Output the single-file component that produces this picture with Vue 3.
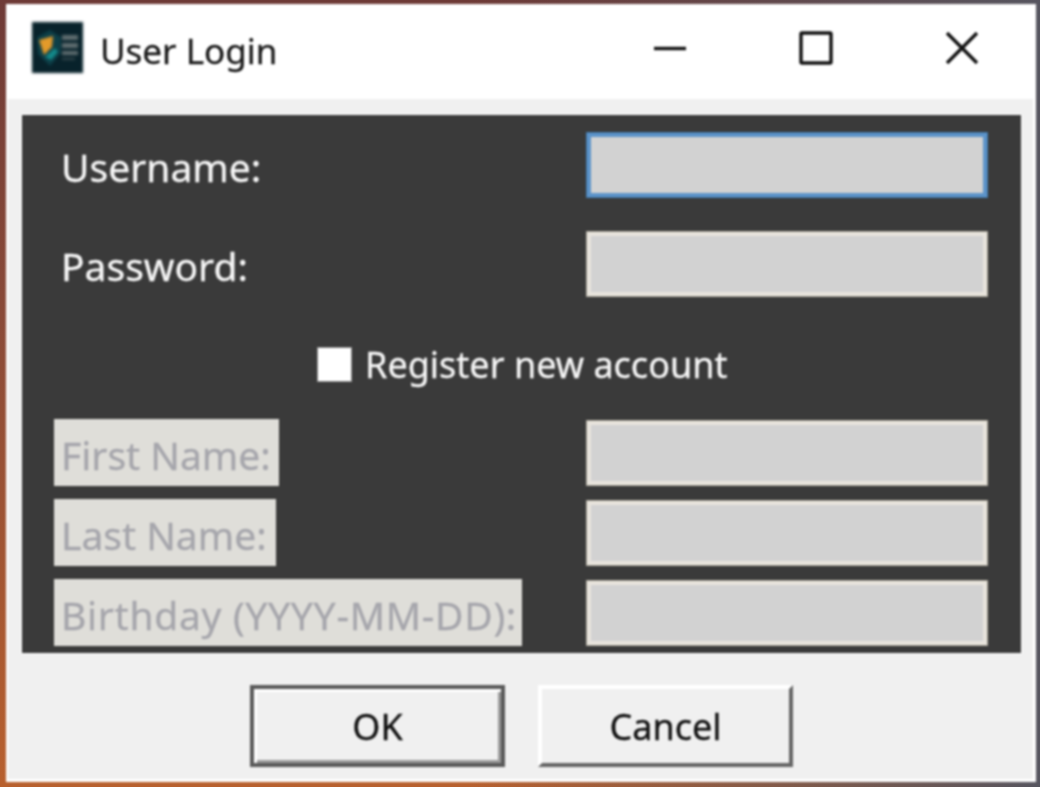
<script setup>
// User Login dialog, classic Windows look on a dark form panel
const extraFields = [
  { label: 'First Name:', width: '225px' },
  { label: 'Last Name:', width: '222px' },
  { label: 'Birthday (YYYY-MM-DD):', width: '468px', wide: true },
]
</script>

<template>
  <div class="desktop">
    <div class="window">
      <header class="titlebar">
        <svg class="app-icon" viewBox="0 0 51 51">
          <rect width="51" height="51" fill="#08222b" />
          <path d="M5 15 L18 8 L29 15 L29 31 L18 44 L6 32 Z" fill="#0d3f48" />
          <path d="M7 18 L21 14 L20 25 L12 33 Z" fill="#e39a2a" />
          <path d="M13 35 L23 26 L26 30 L19 38 Z" fill="#138a8a" />
          <g fill="#5f6d70">
            <rect x="30" y="13" width="16" height="5" />
            <rect x="30" y="21" width="16" height="5" />
            <rect x="30" y="29" width="16" height="4" />
            <rect x="30" y="36" width="13" height="2" opacity="0.5" />
          </g>
        </svg>
        <span class="title">User Login</span>
        <div class="controls">
          <button class="ctl">
            <svg viewBox="0 0 34 34"><path d="M1 17.5H33" /></svg>
          </button>
          <button class="ctl">
            <svg viewBox="0 0 34 34"><rect x="2" y="2" width="30" height="30" rx="1" /></svg>
          </button>
          <button class="ctl">
            <svg viewBox="0 0 34 34"><path d="M2 2L32 32M32 2L2 32" /></svg>
          </button>
        </div>
      </header>

      <div class="client">
        <main class="panel">
          <div class="row account-row">
            <label class="label">Username:</label>
            <input class="field focused" type="text" />
          </div>
          <div class="row account-row">
            <label class="label">Password:</label>
            <input class="field" type="password" />
          </div>

          <label class="register">
            <input class="check" type="checkbox" />
            <span>Register new account</span>
          </label>

          <div class="extra">
            <div v-for="f in extraFields" :key="f.label" class="row">
              <label class="label off" :class="{ wide: f.wide }" :style="{ width: f.width }">{{ f.label }}</label>
              <input class="field" type="text" disabled />
            </div>
          </div>
        </main>

        <footer class="actions">
          <button class="btn default">OK</button>
          <button class="btn">Cancel</button>
        </footer>
      </div>
    </div>
  </div>
</template>

<style>
html,
body {
  margin: 0;
  background: #6b5a55;
}
</style>

<style scoped>
.desktop {
  width: 1040px;
  height: 787px;
  box-sizing: border-box;
  padding: 4px 4px 5px 6px;
  overflow: hidden;
  background:
    linear-gradient(90deg, transparent 45%, #56555f 100%),
    linear-gradient(180deg, #6e3a36 0%, #8a4a38 40%, #b8602e 100%);
  font-family: "Noto Sans", "Open Sans", sans-serif;
  -webkit-text-stroke: 0.3px currentColor;
}

.window {
  height: 100%;
  display: flex;
  flex-direction: column;
  background: #fff;
  filter: blur(0.8px);
}

/* Title bar */
.titlebar {
  height: 95px;
  flex: none;
  box-sizing: border-box;
  padding: 0 1px 7px 26px;
  display: flex;
  align-items: center;
}

.app-icon {
  width: 51px;
  height: 51px;
  margin-top: -1px;
  filter: blur(1px);
}

.title {
  margin: 4px 0 0 17px;
  font-size: 35px;
  color: #1a1a1a;
}

.controls {
  margin-left: auto;
  display: flex;
}

.ctl {
  width: 146px;
  height: 60px;
  padding: 0;
  border: none;
  background: none;
  display: flex;
  align-items: center;
  justify-content: center;
}

.ctl svg {
  width: 34px;
  height: 34px;
  fill: none;
  stroke: #111;
  stroke-width: 3.4;
}

/* Client area */
.client {
  flex: 1;
  display: flex;
  flex-direction: column;
  margin: 0 3px 3px 2px;
  background: #f0f0f0;
}

.panel {
  height: 538px;
  flex: none;
  box-sizing: border-box;
  margin: 16px 12px 0 14px;
  padding: 17px 33px 0 32px;
  background: #3a3a3a;
  box-shadow: 0 0 0 1px #fbfbfb;
}

.row {
  display: flex;
  align-items: center;
  justify-content: space-between;
}

.account-row {
  margin-bottom: 33px;
}

.label {
  font-size: 39px;
  color: #f6f6f6;
  padding: 3px 0 0 7px;
  box-sizing: border-box;
}

.label.off {
  height: 67px;
  padding-top: 0;
  line-height: 71px;
  background: #dfded9;
  color: #a6a6ac;
  white-space: nowrap;
}

.label.wide {
  letter-spacing: 0.7px;
}

.field {
  width: 402px;
  height: 66px;
  flex: none;
  box-sizing: border-box;
  margin: 0;
  border: 5px solid #e8e4dd;
  border-radius: 0;
  background: #d2d2d2;
  outline: 1px solid #a8a498;
  outline-offset: -1px;
}

.field.focused {
  border-color: #5d94c9;
  outline-color: #3f75a8;
}

.register {
  height: 89px;
  box-sizing: border-box;
  padding: 0 0 21px 263px;
  display: flex;
  align-items: center;
  font-size: 36px;
  color: #f6f6f6;
}

.check {
  appearance: none;
  width: 35px;
  height: 35px;
  margin: 0 13px 0 0;
  background: #fff;
  border: 1px solid #8e8e8e;
  box-sizing: border-box;
}

.extra {
  display: flex;
  flex-direction: column;
  gap: 13px;
}

/* Dialog buttons */
.actions {
  display: flex;
  gap: 33px;
  padding: 32px 0 0 242px;
}

.btn {
  width: 255px;
  height: 82px;
  box-sizing: border-box;
  padding: 0;
  font: inherit;
  font-size: 36px;
  color: #111;
  background: #f0f0f0;
  border: 4px solid;
  border-color: #fff #666 #666 #fff;
}

.btn.default {
  border: 4px solid #5a5a5a;
  box-shadow: inset 3px 3px 0 #fff, inset -3px -3px 0 #9a9a9a;
}
</style>
